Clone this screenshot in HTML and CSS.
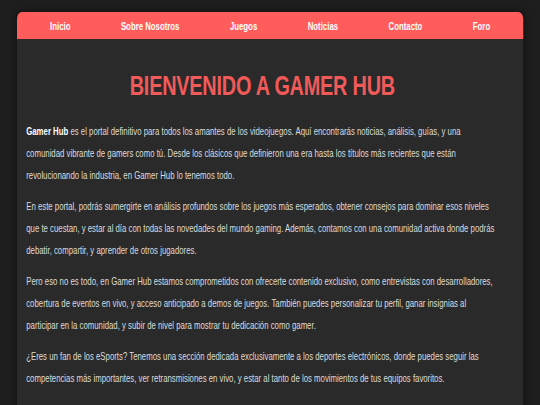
FILE: index.html
```html
<!DOCTYPE html>
<html lang="es">
<head>
<meta charset="utf-8">
<title>Gamer Hub</title>
<link rel="stylesheet" href="styles.css">
</head>
<body>
<div class="page">
  <nav class="nav">
    <a href="#">Inicio</a>
    <a href="#">Sobre Nosotros</a>
    <a href="#">Juegos</a>
    <a href="#">Noticias</a>
    <a href="#">Contacto</a>
    <a href="#">Foro</a>
  </nav>
  <main class="content">
    <h1 class="title">BIENVENIDO A GAMER HUB</h1>
    <p><strong>Gamer Hub</strong> es el portal definitivo para todos los amantes de los videojuegos. Aquí encontrarás noticias, análisis, guías, y una comunidad vibrante de gamers como tú. Desde los clásicos que definieron una era hasta los títulos más recientes que están revolucionando la industria, en Gamer Hub lo tenemos todo.</p>
    <p>En este portal, podrás sumergirte en análisis profundos sobre los juegos más esperados, obtener consejos para dominar esos niveles que te cuestan, y estar al día con todas las novedades del mundo gaming. Además, contamos con una comunidad activa donde podrás debatir, compartir, y aprender de otros jugadores.</p>
    <p>Pero eso no es todo, en Gamer Hub estamos comprometidos con ofrecerte contenido exclusivo, como entrevistas con desarrolladores, cobertura de eventos en vivo, y acceso anticipado a demos de juegos. También puedes personalizar tu perfil, ganar insignias al participar en la comunidad, y subir de nivel para mostrar tu dedicación como gamer.</p>
    <p>¿Eres un fan de los eSports? Tenemos una sección dedicada exclusivamente a los deportes electrónicos, donde puedes seguir las competencias más importantes, ver retransmisiones en vivo, y estar al tanto de los movimientos de tus equipos favoritos.</p>
    <p>No esperes más y únete a nuestra comunidad. Regístrate hoy mismo y comienza a disfrutar de todo lo que Gamer Hub tiene para ofrecerte. ¡Nos vemos en el juego!</p>
  </main>
</div>
</body>
</html>
```
FILE: styles.css
```css
html, body {
  margin: 0;
  padding: 0;
  background: #1e1e1e;
  font-family: "Liberation Sans", Arial, sans-serif;
  color: #dcdcdc;
  overflow: hidden;
}

body {
  padding: 12px 0 0 17px;
}

/* the reference renders a condensed face; scale the whole sheet horizontally */
.page {
  width: 714px;
  background: #2a2a2a;
  border-radius: 7px 7px 0 0;
  box-shadow: 0 0 10px rgba(0, 0, 0, 0.5);
  transform: scaleX(0.709);
  transform-origin: 0 0;
}

.nav {
  display: flex;
  justify-content: space-around;
  align-items: center;
  height: 27px;
  padding: 0 11px;
  background: #ff5c5c;
  border-radius: 7px 7px 0 0;
}

.nav a {
  color: #fff;
  text-decoration: none;
  font-weight: bold;
  font-size: 11px;
}

.content {
  padding: 27px 35px 0 13px;
}

.title {
  margin: 0 0 15px;
  text-align: center;
  color: #f25a5a;
  font-size: 28px;
  letter-spacing: -0.3px;
  font-weight: bold;
  line-height: 40px;
}

.content p {
  margin: 0 0 9px;
  font-size: 11px;
  line-height: 22px;
}

.content p:first-of-type {
  margin-top: -1px;
}

.content strong {
  color: #fff;
}
```
